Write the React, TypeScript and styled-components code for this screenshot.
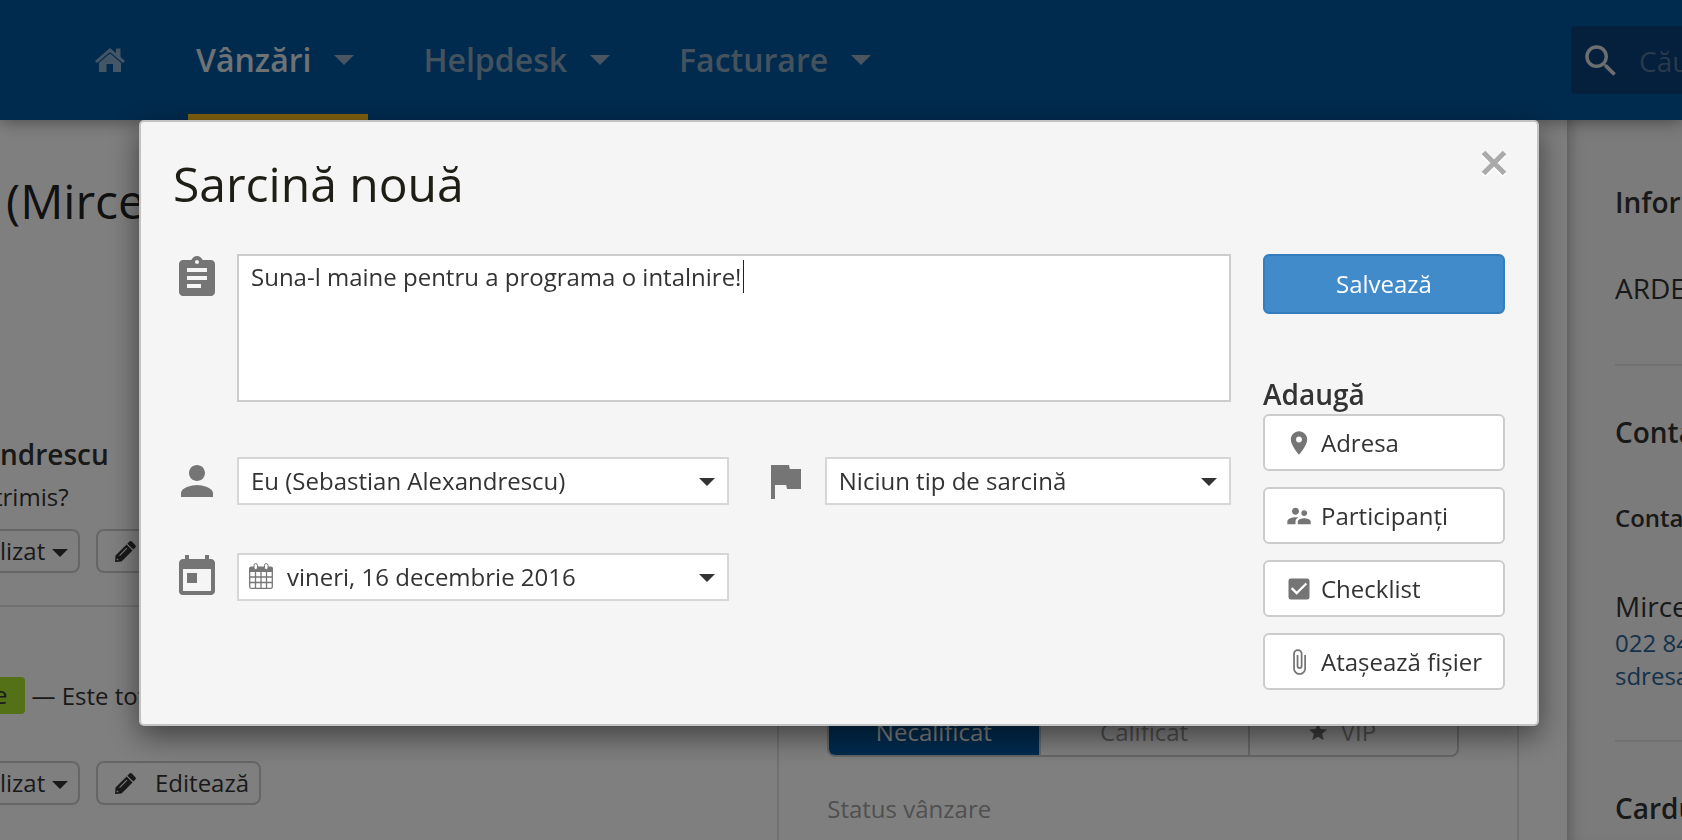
import React, { useState } from "react";
import styled, { createGlobalStyle, css } from "styled-components";
import {
  MdAssignment,
  MdAttachFile,
  MdCheckBox,
  MdFlag,
  MdPerson,
  MdPlace,
  MdSearch,
  MdStar,
  MdSupervisorAccount,
  MdToday,
} from "react-icons/md";

const GlobalStyle = createGlobalStyle`
  *, *::before, *::after { box-sizing: border-box; }
  body {
    margin: 0;
    background: #fff;
    color: #333;
    font: 400 24px/32px "Open Sans", "Noto Sans", sans-serif;
  }
  h1, h2, h3, p { margin: 0; }
  button, select, textarea, input { font: inherit; color: inherit; }
  svg { display: block; flex: none; }
`;

const Shell = styled.div`
  display: flex;
  flex-direction: column;
  height: 100vh;
  overflow: hidden;
`;

/* ---------- top bar ---------- */

const TopBar = styled.header`
  position: relative;
  z-index: 1;
  flex: none;
  display: flex;
  align-items: stretch;
  height: 120px;
  padding-left: 95px;
  background: #00569c;
  box-shadow: 0 2px 16px rgba(0, 0, 0, 0.4);
`;

const HomeLink = styled.a`
  display: flex;
  align-items: center;
  margin-right: 63px;
  color: #88accb;
`;

const Nav = styled.nav`
  display: flex;
  gap: 47px;
  flex: 1;
`;

const NavItem = styled.a<{ $active?: boolean }>`
  display: flex;
  align-items: center;
  gap: 23px;
  padding: 6px 14px 0 8px;
  border-bottom: 6px solid transparent;
  color: #88a4bc;
  font-size: 32px;
  font-weight: 600;
  line-height: 40px;
  text-decoration: none;
  ${(p) =>
    p.$active &&
    css`
      border-bottom-color: #ffc21f;
      color: #dfe4e8;
    `}
`;

const Caret = styled.span<{ $size: number }>`
  flex: none;
  border: solid transparent;
  border-width: ${(p) => p.$size}px ${(p) => p.$size}px 0;
  border-top-color: currentColor;
`;

const NavCaret = styled(Caret)`
  color: #94aabe;
`;

const SearchBox = styled.label`
  flex: none;
  align-self: center;
  display: flex;
  align-items: center;
  gap: 17px;
  width: 111px;
  height: 68px;
  padding: 2px 0 0 9px;
  border-radius: 4px 0 0 4px;
  background: #084078;
  color: #dadde0;
`;

const SearchInput = styled.input`
  flex: 1;
  min-width: 0;
  padding: 0;
  border: 0;
  outline: 0;
  background: none;
  font-size: 28px;
  line-height: 40px;
  &::placeholder { color: #52759a; opacity: 1; }
`;

/* ---------- page behind the dialog ---------- */

const Columns = styled.main`
  flex: 1;
  min-height: 0;
  display: flex;
`;

const Feed = styled.section`
  flex: 1;
  min-width: 0;
  padding-top: 48px;
  white-space: nowrap;
`;

const PageTitle = styled.h1`
  padding-left: 6px;
  margin-bottom: 200px;
  color: #222;
  font-size: 48px;
  font-weight: 400;
  line-height: 66px;
`;

const Heading = styled.h2`
  font-size: 28px;
  font-weight: 600;
  line-height: 40px;
`;

const FeedText = styled.p`
  margin: 7px 0 16px -6px;
`;

const ButtonRow = styled.div`
  display: flex;
  gap: 16px;
`;

const FeedButton = styled.button<{ $cut?: boolean }>`
  display: flex;
  align-items: center;
  gap: 19px;
  height: 44px;
  padding: 0 10px 0 17px;
  border: 2px solid #ccc;
  border-radius: 8px;
  background: none;
  ${(p) =>
    p.$cut &&
    css`
      gap: 7px;
      width: 80px;
      padding: 0 10px 0 0;
      border-left: 0;
      border-radius: 0 8px 8px 0;
    `}
  ${Caret} {
    margin-top: 4px;
  }
`;

const Divider = styled.hr`
  height: 2px;
  margin: 32px 0 70px;
  border: 0;
  background: #e2e2e2;
`;

const StatusLine = styled.div`
  display: flex;
  align-items: center;
  gap: 6px;
  margin-bottom: 47px;
`;

const Tag = styled.span`
  flex: none;
  margin-left: -6px;
  padding: 2px 18px 3px 0;
  border-radius: 4px;
  background: #a8e230;
`;

const Details = styled.section`
  display: flex;
  flex-direction: column;
  justify-content: flex-end;
  width: 44.1%;
  padding: 0 58px 15px 48px;
  border: solid #e2e2e2;
  border-width: 0 2px;
`;

const Segments = styled.div`
  display: grid;
  grid-template-columns: repeat(3, 1fr);
  margin-bottom: 36px;
  border: 2px solid #ccc;
  border-radius: 8px;
  overflow: hidden;
`;

const Segment = styled.button<{ $active?: boolean; $starred?: boolean }>`
  display: flex;
  align-items: center;
  justify-content: center;
  gap: 12px;
  height: 46px;
  padding: 0 ${(p) => (p.$starred ? 24 : 0)}px 0 0;
  border: 0;
  background: ${(p) => (p.$active ? "#00569c" : "none")};
  color: ${(p) => (p.$active ? "#fff" : "#999")};
  & + & { border-left: 2px solid #ccc; }
  svg { color: #777; }
`;

const Muted = styled.p`
  color: #a0a0a0;
`;

const Side = styled.aside`
  flex: none;
  width: 115px;
  margin-left: 48px;
  padding: 62px 0 0 48px;
  background: #f6f6f6;
  box-shadow: inset 14px 0 16px -12px rgba(0, 0, 20, 0.3);
  white-space: nowrap;
  overflow: hidden;
`;

const SideBlock = styled.div<{ $tail?: number }>`
  padding-bottom: ${(p) => p.$tail ?? 0}px;
  & + & {
    padding-top: 46px;
    border-top: 2px solid #e2e2e2;
  }
`;

const SideName = styled.p<{ $gap: number }>`
  margin-top: ${(p) => p.$gap}px;
  font-size: 28px;
  line-height: 40px;
`;

const SideLabel = styled.h3`
  margin-top: 50px;
  font-size: 24px;
  font-weight: 600;
  line-height: 32px;
`;

const SideLink = styled.a`
  display: block;
  color: #2a6496;
  line-height: 33px;
  text-decoration: none;
`;

/* ---------- dialog ---------- */

const Backdrop = styled.div`
  position: fixed;
  inset: 0;
  z-index: 2;
  padding: 120px 143px 0 139px;
  background: rgba(0, 0, 0, 0.5);
`;

const Dialog = styled.div`
  padding: 29px 32px 34px;
  border: 2px solid #c2c2c2;
  border-radius: 5px;
  background: #f5f5f5;
  box-shadow: 0 10px 30px rgba(0, 0, 0, 0.5);
`;

const DialogHead = styled.div`
  display: flex;
  justify-content: space-between;
  align-items: flex-start;
  margin-bottom: 37px;
`;

const DialogTitle = styled.h2`
  color: #1e1d16;
  font-size: 48px;
  font-weight: 400;
  line-height: 66px;
`;

const CloseButton = styled.button`
  margin: -5px -6px 0 0;
  padding: 4px;
  border: 0;
  background: none;
  color: #aaa;
  cursor: pointer;
`;

const DialogBody = styled.form`
  display: flex;
  gap: 32px;
`;

const Fields = styled.div`
  flex: 1;
  min-width: 0;
  display: flex;
  flex-direction: column;
  gap: 48px;
`;

const FieldRow = styled.div`
  display: grid;
  grid-template-columns: 13fr 11fr;
  gap: 32px;
`;

const Field = styled.label`
  display: flex;
  gap: 16px;
  color: #757575;
`;

const NoteField = styled(Field)`
  padding-bottom: 7px;
`;

const Control = styled.div`
  position: relative;
  flex: 1;
  min-width: 0;
  color: #333;
`;

const Note = styled.textarea`
  display: block;
  width: 100%;
  height: 148px;
  padding: 5px 12px;
  border: 2px solid #ccc;
  border-radius: 0;
  outline: 0;
  background: #fff;
  resize: none;
`;

const TextCursor = styled.span`
  position: absolute;
  top: 6px;
  left: 506px;
  width: 1px;
  height: 33px;
  background: #222;
`;

const Select = styled.select<{ $icon?: boolean }>`
  display: block;
  width: 100%;
  height: 48px;
  padding: 0 40px 0 ${(p) => (p.$icon ? 48 : 12)}px;
  border: 2px solid #d6d6d6;
  border-radius: 0;
  outline: 0;
  background: #fff;
  appearance: none;
`;

const SelectCaret = styled(Caret)`
  position: absolute;
  top: 21px;
  right: 14px;
  pointer-events: none;
`;

const SelectIcon = styled.span`
  position: absolute;
  top: 10px;
  left: 12px;
  color: #777;
  pointer-events: none;
`;

const Actions = styled.div`
  flex: none;
  display: flex;
  flex-direction: column;
  gap: 16px;
  width: 242px;
`;

const SaveButton = styled.button`
  height: 60px;
  border: 2px solid #357ebd;
  border-radius: 6px;
  background: #428bca;
  color: #fff;
`;

const AddGroup = styled.section`
  display: flex;
  flex-direction: column;
  margin-top: 44px;
`;

const AddList = styled.div`
  display: grid;
  gap: 16px;
`;

const AddButton = styled.button`
  display: flex;
  align-items: center;
  gap: 8px;
  height: 57px;
  padding: 0 0 0 20px;
  border: 2px solid #ccc;
  border-radius: 6px;
  background: #fff;
  white-space: nowrap;
  svg { color: #757575; }
`;

const HomeIcon = () => (
  <svg width="30" height="24" viewBox="0 0 30 24" fill="currentColor" aria-hidden="true">
    <path d="M15 0 0 13l2 2L15 4l13 11 2-2-4.500-4V.5H21v4.700z" />
    <path d="M15 5.500 4 14.800V24h7.500v-8h6.500v8H26v-9.200z" />
  </svg>
);

const PencilIcon = () => (
  <svg width="21" height="21" viewBox="0 0 20 20" fill="currentColor" aria-hidden="true">
    <path d="M13.500.8a2 2 0 0 1 2.800 0l2.900 2.900a2 2 0 0 1 0 2.800l-1.700 1.700-5.700-5.700z" />
    <path fillRule="evenodd" d="m11 3.300 5.700 5.700L6.200 19.500 0 20l.5-6.200zM11 6.500 4 13.500l.7.700 7-7zM1.800 16.500 1.600 18.400l1.900-.2z" />
  </svg>
);

const CalendarIcon = () => (
  <svg width="24" height="26" viewBox="0 0 24 26" aria-hidden="true">
    <path d="M0 9V5.500A2 2 0 0 1 2 3.500h20a2 2 0 0 1 2 2V9z" fill="currentColor" />
    <path
      d="M.7 8v15.800a1.500 1.500 0 0 0 1.500 1.500h19.600a1.500 1.500 0 0 0 1.500-1.500V8M1 14h22M1 19.500h22M6.500 8v17M12 8v17M17.500 8v17"
      fill="none"
      stroke="currentColor"
      strokeWidth="1.300"
    />
    <rect x="5" y=".6" width="3.500" height="6" rx="1.700" fill="#fff" stroke="currentColor" />
    <rect x="15.500" y=".6" width="3.500" height="6" rx="1.700" fill="#fff" stroke="currentColor" />
  </svg>
);

const CloseIcon = () => (
  <svg width="26" height="28" viewBox="0 0 26 28" fill="none" strokeWidth="5" aria-hidden="true">
    <path d="m2.500 4.500 21 21m0-21-21 21" stroke="#fff" />
    <path d="m2.500 2.500 21 21m0-21-21 21" stroke="currentColor" />
  </svg>
);

const NAV = ["Vânzări", "Helpdesk", "Facturare"];

const EXTRAS = [
  { label: "Adresa", Icon: MdPlace },
  { label: "Participanți", Icon: MdSupervisorAccount },
  { label: "Checklist", Icon: MdCheckBox },
  { label: "Atașează fișier", Icon: MdAttachFile },
];

function FeedActions() {
  return (
    <ButtonRow>
      <FeedButton $cut>
        lizat
        <Caret $size={8} />
      </FeedButton>
      <FeedButton>
        <PencilIcon />
        Editează
      </FeedButton>
    </ButtonRow>
  );
}

function NewTaskDialog() {
  const [note, setNote] = useState("Suna-l maine pentru a programa o intalnire!");
  return (
    <Backdrop>
      <Dialog role="dialog" aria-modal="true" aria-labelledby="task-title">
        <DialogHead>
          <DialogTitle id="task-title">Sarcină nouă</DialogTitle>
          <CloseButton type="button" aria-label="Închide">
            <CloseIcon />
          </CloseButton>
        </DialogHead>
        <DialogBody onSubmit={(e) => e.preventDefault()}>
          <Fields>
            <NoteField>
              <MdAssignment size={48} />
              <Control>
                <Note
                  aria-label="Sarcină"
                  spellCheck={false}
                  value={note}
                  onChange={(e) => setNote(e.target.value)}
                />
                <TextCursor />
              </Control>
            </NoteField>
            <FieldRow>
              <Field>
                <MdPerson size={48} />
                <Control>
                  <Select aria-label="Responsabil">
                    <option>Eu (Sebastian Alexandrescu)</option>
                  </Select>
                  <SelectCaret $size={8} />
                </Control>
              </Field>
              <Field>
                <MdFlag size={48} />
                <Control>
                  <Select aria-label="Tip de sarcină">
                    <option>Niciun tip de sarcină</option>
                  </Select>
                  <SelectCaret $size={8} />
                </Control>
              </Field>
            </FieldRow>
            <FieldRow>
              <Field>
                <MdToday size={48} />
                <Control>
                  <Select aria-label="Data" $icon>
                    <option>vineri, 16 decembrie 2016</option>
                  </Select>
                  <SelectIcon>
                    <CalendarIcon />
                  </SelectIcon>
                  <SelectCaret $size={8} />
                </Control>
              </Field>
            </FieldRow>
          </Fields>
          <Actions>
            <SaveButton type="submit">Salvează</SaveButton>
            <AddGroup>
              <Heading as="h3">Adaugă</Heading>
              <AddList>
                {EXTRAS.map(({ label, Icon }) => (
                  <AddButton key={label} type="button">
                    <Icon size={28} />
                    {label}
                  </AddButton>
                ))}
              </AddList>
            </AddGroup>
          </Actions>
        </DialogBody>
      </Dialog>
    </Backdrop>
  );
}

export default function App() {
  return (
    <>
      <GlobalStyle />
      <Shell>
        <TopBar>
          <HomeLink href="#" aria-label="Acasă">
            <HomeIcon />
          </HomeLink>
          <Nav>
            {NAV.map((name, i) => (
              <NavItem key={name} href="#" $active={i === 0}>
                {name}
                <NavCaret $size={10} />
              </NavItem>
            ))}
          </Nav>
          <SearchBox>
            <MdSearch size={42} />
            <SearchInput type="text" aria-label="Căutare" placeholder="Cău" />
          </SearchBox>
        </TopBar>
        <Columns>
          <Feed>
            <PageTitle>(Mirce</PageTitle>
            <Heading>ndrescu</Heading>
            <FeedText>trimis?</FeedText>
            <FeedActions />
            <Divider />
            <StatusLine>
              <Tag>e</Tag>
              <span>— Este tot</span>
            </StatusLine>
            <FeedActions />
          </Feed>
          <Details>
            <Segments>
              <Segment $active>Necalificat</Segment>
              <Segment>Calificat</Segment>
              <Segment $starred>
                <MdStar size={22} />
                VIP
              </Segment>
            </Segments>
            <Muted>Status vânzare</Muted>
          </Details>
          <Side>
            <SideBlock $tail={56}>
              <Heading>Infor</Heading>
              <SideName $gap={46}>ARDE</SideName>
            </SideBlock>
            <SideBlock $tail={48}>
              <Heading>Conta</Heading>
              <SideLabel>Conta</SideLabel>
              <SideName $gap={52}>Mirce</SideName>
              <SideLink href="#">022 84</SideLink>
              <SideLink href="#">sdresa</SideLink>
            </SideBlock>
            <SideBlock>
              <Heading>Cardu</Heading>
            </SideBlock>
          </Side>
        </Columns>
      </Shell>
      <NewTaskDialog />
    </>
  );
}
